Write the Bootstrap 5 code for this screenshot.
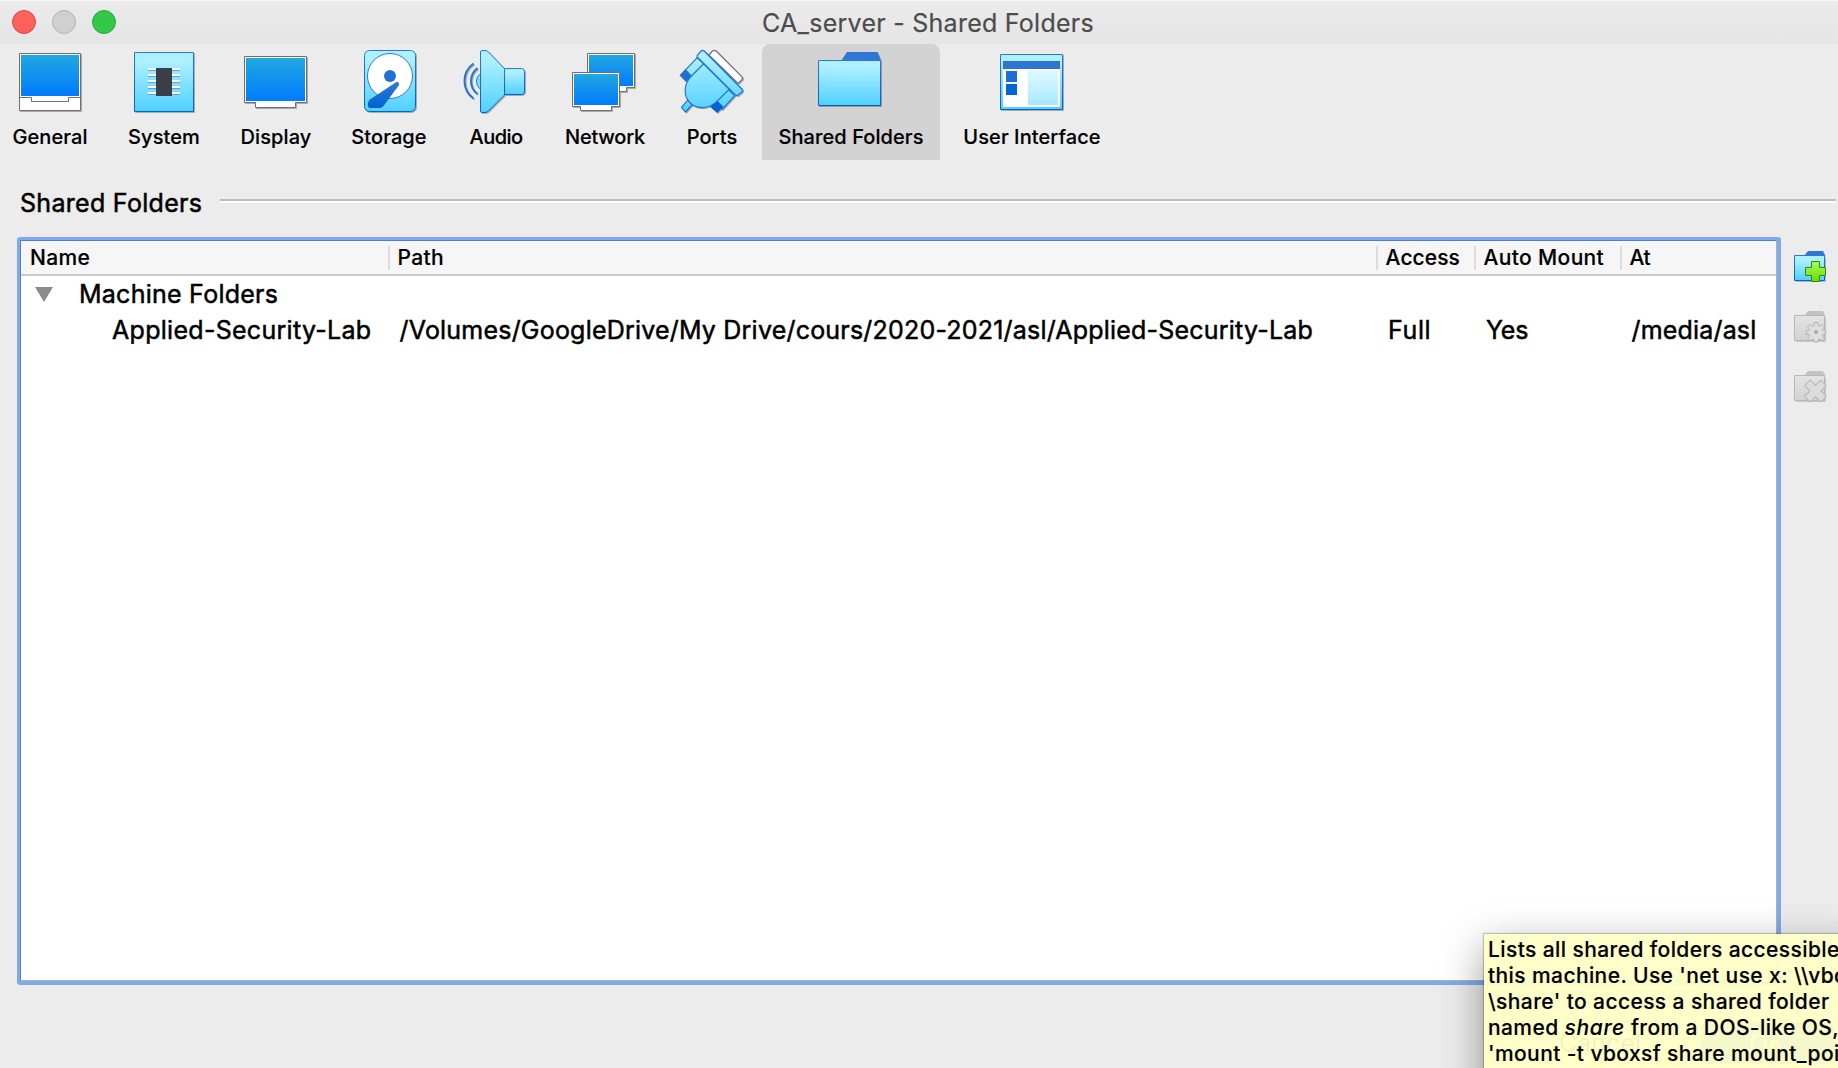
<!DOCTYPE html>
<html lang="en">
<head>
<meta charset="utf-8">
<title>CA_server - Shared Folders</title>
<link href="https://cdn.jsdelivr.net/npm/bootstrap@5.3.0/dist/css/bootstrap.min.css" rel="stylesheet">
<style>
body{width:1838px;height:1068px;background:#ececec;color:#000;font-family:Inter,"Liberation Sans",sans-serif;line-height:1.2}
.titlebar{height:44px;background:linear-gradient(#ebebeb,#e5e5e5);border-top:1px solid #f7f7f7;padding-left:12px}
.light{width:24px;height:24px;border-radius:50%;margin-right:16px;border:1px solid;margin-top:-1px}
.l-close{background:#fe605b;border-color:#e24841}
.l-min{background:#d0d0d0;border-color:#b4b4b4}
.l-max{background:#34c84a;border-color:#25ac34}
.wintitle{font-size:25px;line-height:30px;letter-spacing:.261px;color:#4c4c4c;margin-left:630px;-webkit-text-stroke:.2px #4c4c4c}
.toolbar{height:116px}
.tool{padding-top:4px;font-size:20px;line-height:24px;font-weight:500;letter-spacing:.08px;border-radius:8px 8px 0 0;white-space:nowrap;-webkit-text-stroke:.15px #000}
.tool svg{width:68px;height:68px;margin-bottom:9px;filter:drop-shadow(1px 1px 0 rgba(0,0,0,.28))}
.tool.active{background:#d3d3d3;margin-left:10px}
.w1{width:100px}.w2{width:128px}.w3{width:96px}.w4{width:130px}.w5{width:84px}.w6{width:134px}.w7{width:80px}.w8{width:178px}.w9{width:184px}
.sect{margin:28px 2px 19px 20px;font-size:25px;line-height:30px;letter-spacing:.3px;height:30px;-webkit-text-stroke:.5px #000}
.rule{margin:11px 0 0 18px;height:4px;background:#fff;border-top:2px solid #bdbdbd}
.ring{width:1764px;height:748px;margin-left:17px;background:#7fabee;border-radius:3px;padding:3px 4px 4px 3px}
.tree{width:100%;height:100%;background:#fff;border:1px solid;border-color:#4f80cc #b3b3b3 #b3b3b3 #4f80cc}
.thead-bar{height:35px;background:#f6f6f6;border-bottom:2px solid #cbcbcb;font-size:21px;font-weight:500;line-height:23px;letter-spacing:.35px;padding-top:5px;-webkit-text-stroke:.15px #000}
.thead-bar>div{height:24px;padding-left:7.6px;border-left:2px solid #dcdcdc;white-space:nowrap}
.thead-bar>div:first-child{border-left:0;padding-left:9px}
.trow{height:36px;font-size:25px;line-height:36px;-webkit-text-stroke:.5px #000;white-space:nowrap}
.c1{width:367px}.c2{width:988px}.c3{width:98px}.c4{width:146px}.c5{width:155px}
.tri{width:18px;height:15px;margin:0 26px 0 14px}
.side{margin:11px 0 0 9px;width:40px;gap:20px}
.side svg{width:40px;height:40px;display:block}
.foot{margin-top:37px;padding-right:4px;gap:33px}
.foot .btn{width:134px;height:42px;padding:0;font-size:25px;line-height:36px;border-radius:7px;border-color:#bbb;background:#fff;color:#000}
.foot .btn.okb{background:#2a7cf6;color:#fff}
.tip{position:absolute;left:1484px;top:934px;width:380px;height:180px;background:rgba(255,255,199,.95);box-shadow:0 0 1px 1px rgba(0,0,0,.2),0 14px 40px rgba(0,0,0,.4);padding:3px 0 0 4px;font-size:21px;line-height:26px;font-weight:500;letter-spacing:.4px;white-space:nowrap;-webkit-text-stroke:.15px #000}
.tip i{letter-spacing:.7px}
</style>
<script src="https://cdn.jsdelivr.net/npm/bootstrap@5.3.0/dist/js/bootstrap.bundle.min.js"></script>
</head>
<body class="m-0 overflow-hidden position-relative">
<svg width="0" height="0" class="position-absolute">
<defs>
<linearGradient id="scr" x1="0" y1="0" x2="0" y2="1"><stop offset="0" stop-color="#21a8e0"/><stop offset="1" stop-color="#007bfc"/></linearGradient>
<linearGradient id="sky" x1="0" y1="0" x2="0" y2="1"><stop offset=".15" stop-color="#adf0ff"/><stop offset="1" stop-color="#50d0ff"/></linearGradient>
<linearGradient id="edge" x1="0" y1="0" x2="0" y2="1"><stop offset="0" stop-color="#2f78d4"/><stop offset="1" stop-color="#0063d1"/></linearGradient>
<linearGradient id="gry" x1="0" y1="0" x2="0" y2="1"><stop offset="0" stop-color="#e4e4e4"/><stop offset="1" stop-color="#d2d2d2"/></linearGradient>
<linearGradient id="grn" x1="0" y1="0" x2="0" y2="1"><stop offset="0" stop-color="#a5ff5c"/><stop offset="1" stop-color="#6fd800"/></linearGradient>
<linearGradient id="prt" gradientUnits="userSpaceOnUse" x1="0" y1="30" x2="0" y2="218"><stop offset=".1" stop-color="#adf0ff"/><stop offset="1" stop-color="#50d0ff"/></linearGradient>
</defs>
</svg>

<header class="titlebar d-flex align-items-center">
<span class="light l-close"></span><span class="light l-min"></span><span class="light l-max"></span>
<span class="wintitle">CA_server - Shared Folders</span>
</header>

<nav class="toolbar d-flex">
<div class="tool w1 d-flex flex-column align-items-center">
<svg viewBox="16 48 68 68"><path d="M19.5 53.5h61v57h-61z" fill="#fff" stroke="#707070"/><path d="M21 55h58v41H21z" fill="url(#scr)"/><path d="M19.5 97.5h12v4h37v-4h12" fill="none" stroke="#707070"/></svg>General</div>
<div class="tool w2 d-flex flex-column align-items-center">
<svg viewBox="130 48 68 68"><path d="M134.500 52.500h59v59h-59z" fill="url(#sky)" stroke="url(#edge)"/><path d="M148 70.500h32M148 76.500h32M148 82.500h32M148 88.500h32M148 94.500h32" stroke="#5aa5de"/><path d="M148 69h32M148 75h32M148 81h32M148 87h32M148 93h32" stroke="#fff" stroke-width="2"/><path d="M156 68h16v28h-16z" fill="#393e48"/></svg>System</div>
<div class="tool w3 d-flex flex-column align-items-center">
<svg viewBox="242 48 68 68"><path d="M244.500 56.500h62v46h-11v5h-40v-5h-11z" fill="#fff" stroke="#707070"/><path d="M246 58h59v43h-59z" fill="url(#scr)"/></svg>Display</div>
<div class="tool w4 d-flex flex-column align-items-center">
<svg viewBox="355 48 68 68"><rect x="364.500" y="50.500" width="51" height="61" rx="5" fill="url(#sky)" stroke="url(#edge)"/><circle cx="390" cy="76" r="22.500" fill="#fff" stroke="#2f78d4"/><circle cx="390" cy="76" r="6" fill="#1f6fd5"/><path d="M396 82.300Q399.500 81.300 399 85L383.500 106Q382 108 379.500 108H370Q368 108 368 105.500V103Q368 101 370 99.500Z" fill="url(#edge)"/></svg>Storage</div>
<div class="tool w5 d-flex flex-column align-items-center" style="letter-spacing:-.55px">
<svg viewBox="462 48 68 68"><path d="M473.500 63.500Q464.500 70 464.500 81T473.500 98.500" fill="none" stroke="#2676d6" stroke-width="2"/><path d="M477.500 68Q471 73 471 81T477.500 94" fill="none" stroke="#2676d6" stroke-width="2"/><path d="M480.500 74.500h-1q-3 2-3 6.500t3 7.500h1z" fill="#80e1ff" stroke="#2676d6"/><path d="M480.500 52q0-1.500 1.500-1.500h3q2 0 3.500 1.500L504.500 68.500V95L488.500 111q-1.500 1.500-3.500 1.500h-3q-1.500 0-1.500-1.500z" fill="url(#sky)" stroke="url(#edge)"/><path d="M504.500 68.500h17q3 0 3 3v20q0 3-3 3h-17z" fill="url(#sky)" stroke="url(#edge)"/></svg>Audio</div>
<div class="tool w6 d-flex flex-column align-items-center" style="letter-spacing:-.22px">
<svg viewBox="571 48 68 68"><path d="M587.500 53.500h47v34h-8v4h-31v-4h-8z" fill="#fff" stroke="#707070"/><path d="M589 55h44v31h-44z" fill="url(#scr)"/><path d="M572.500 72.500h47v34h-8v4h-31v-4h-8z" fill="#fff" stroke="#707070"/><path d="M574 74h44v31h-44z" fill="url(#scr)"/></svg>Network</div>
<div class="tool w7 d-flex flex-column align-items-center">
<svg viewBox="678.500 48 68 68"><g transform="translate(560 40) scale(.33333)" stroke-width="3.400" stroke-linejoin="round"><path d="M448 45L459 33Q464 29 470 33L546 109Q551 114 547 119L536 130Z" fill="#fff" stroke="#707070"/><path d="M414 52L434 72L395 116L371 97Z" fill="url(#prt)" stroke="#2371d6"/><path d="M360 106L378 88L398 108L380 126Z" fill="#1f6ed4" stroke="none"/><path d="M505 147L526 167L488 208L468 188Z" fill="url(#prt)" stroke="#1269d4"/><path d="M471 180L492 200L473 219L452 200Z" fill="#0063d1" stroke="none"/><path d="M385 180L398 194L378 216L366 202Z" fill="url(#prt)" stroke="#1269d4"/><path d="M412 51L509 148L468 188Q450 203 428 203Q402 202 389 185Q377 172 377 152Q377 130 393 111L433 71" fill="url(#prt)" stroke="#1d70d6"/><path d="M413 46L425 33Q429 29 434 33L547 147Q552 152 547 156L536 165Q532 168 527 164L413 51Z" fill="url(#prt)" stroke="#1d70d6"/></g></svg>Ports</div>
<div class="tool w8 active d-flex flex-column align-items-center">
<svg viewBox="817 48 68 68"><path d="M841 61L847 52H877.500L881 61Z" fill="#2e77d4"/><path d="M818.500 60.500h62v45h-62z" fill="url(#sky)" stroke="url(#edge)"/></svg>Shared Folders</div>
<div class="tool w9 d-flex flex-column align-items-center">
<svg viewBox="998 48 68 68"><path d="M1000.500 54.500h62v55h-62z" fill="url(#sky)" stroke="url(#edge)"/><path d="M1003 61h57v46h-57z" fill="#fff"/><path d="M1003 61h57v8h-57z" fill="#2e75d2"/><path d="M1006 71h11v11h-11z" fill="#1c6dd3"/><path d="M1006 84h11v11h-11z" fill="#0565d2"/><path d="M1028 71h30v34h-30z" fill="url(#sky)" opacity=".5"/></svg>User Interface</div>
</nav>

<div class="sect d-flex align-items-start"><span>Shared Folders</span><div class="rule flex-grow-1"></div></div>

<main class="d-flex align-items-start">
<div class="ring"><div class="tree">
<div class="thead-bar d-flex"><div class="c1">Name</div><div class="c2">Path</div><div class="c3" style="letter-spacing:.08px">Access</div><div class="c4">Auto Mount</div><div class="c5" style="letter-spacing:-.5px">At</div></div>
<div class="trow d-flex align-items-center" style="letter-spacing:.25px"><svg class="tri" viewBox="0 0 18 15"><path d="M0 0h18L9 15z" fill="#8c8c8c"/></svg>Machine Folders</div>
<div class="trow d-flex"><div class="c1" style="padding-left:91px;letter-spacing:.29px">Applied-Security-Lab</div><div class="c2" style="padding-left:11.500px;letter-spacing:.206px">/Volumes/GoogleDrive/My Drive/cours/2020-2021/asl/Applied-Security-Lab</div><div class="c3" style="padding-left:12px;letter-spacing:.6px">Full</div><div class="c4" style="padding-left:12px;letter-spacing:-.2px">Yes</div><div class="c5" style="padding-left:11.500px;letter-spacing:.18px">/media/asl</div></div>
</div></div>
<div class="side d-flex flex-column">
<svg viewBox="1790 248 40 40"><path d="M1796 281.500h29.500V258" fill="none" stroke="#b4b4b4"/><path d="M1804 256L1808 251H1823L1825.500 256Z" fill="#2e77d4"/><path d="M1794.500 255.500h30v25h-30z" fill="url(#sky)" stroke="url(#edge)"/><path d="M1811.500 261.500h8v6h6v8h-6v6h-8v-6h-6v-8h6z" fill="url(#grn)" stroke="#2f8a0c"/></svg>
<svg viewBox="1790 308 40 40"><path d="M1796 341.500h29.500V318" fill="none" stroke="#c8c8c8"/><path d="M1804 316L1808 311H1823L1825.500 316Z" fill="#c3c3c3"/><path d="M1794.500 315.500h30v25h-30z" fill="url(#gry)" stroke="#b8b8b8"/><path fill="#dfdfdf" stroke="#b2b2b2" stroke-linejoin="round" d="M1814 322.500h4v3l2 .8 2-2 2.500 2.500-2 2 .8 2h2.500v3.500h-2.500l-.8 2 2 2-2.500 2.500-2-2-2 .8v2.500h-4v-2.500l-2-.8-2 2-2.500-2.500 2-2-.8-2h-2.500v-3.500h2.500l.8-2-2-2 2.500-2.500 2 2 2-.8z"/><circle cx="1816" cy="332" r="2" fill="#aaa"/></svg>
<svg viewBox="1790 368 40 40"><path d="M1796 401.500h29.500V378" fill="none" stroke="#c8c8c8"/><path d="M1804 376L1808 371H1823L1825.500 376Z" fill="#c3c3c3"/><path d="M1794.500 375.500h30v25h-30z" fill="url(#gry)" stroke="#b8b8b8"/><path transform="rotate(45 1815.500 391)" d="M1811.500 380.500q0-1 1-1h6q1 0 1 1v6.500h6.500q1 0 1 1v6q0 1-1 1h-6.500v6.500q0 1-1 1h-6q-1 0-1-1v-6.500h-6.500q-1 0-1-1v-6q0-1 1-1h6.500z" fill="#dcdcdc" stroke="#b2b2b2"/></svg>
</div>
</main>

<footer class="foot d-flex justify-content-end"><button class="btn">Cancel</button><button class="btn okb">OK</button></footer>

<div class="tip">Lists all shared folders accessible to<br>this machine. Use 'net use x: \\vboxsvr<br>\share' to access a shared folder<br>named <i>share</i> from a DOS-like OS, or<br>'mount -t vboxsf share mount_point'</div>
</body>
</html>
